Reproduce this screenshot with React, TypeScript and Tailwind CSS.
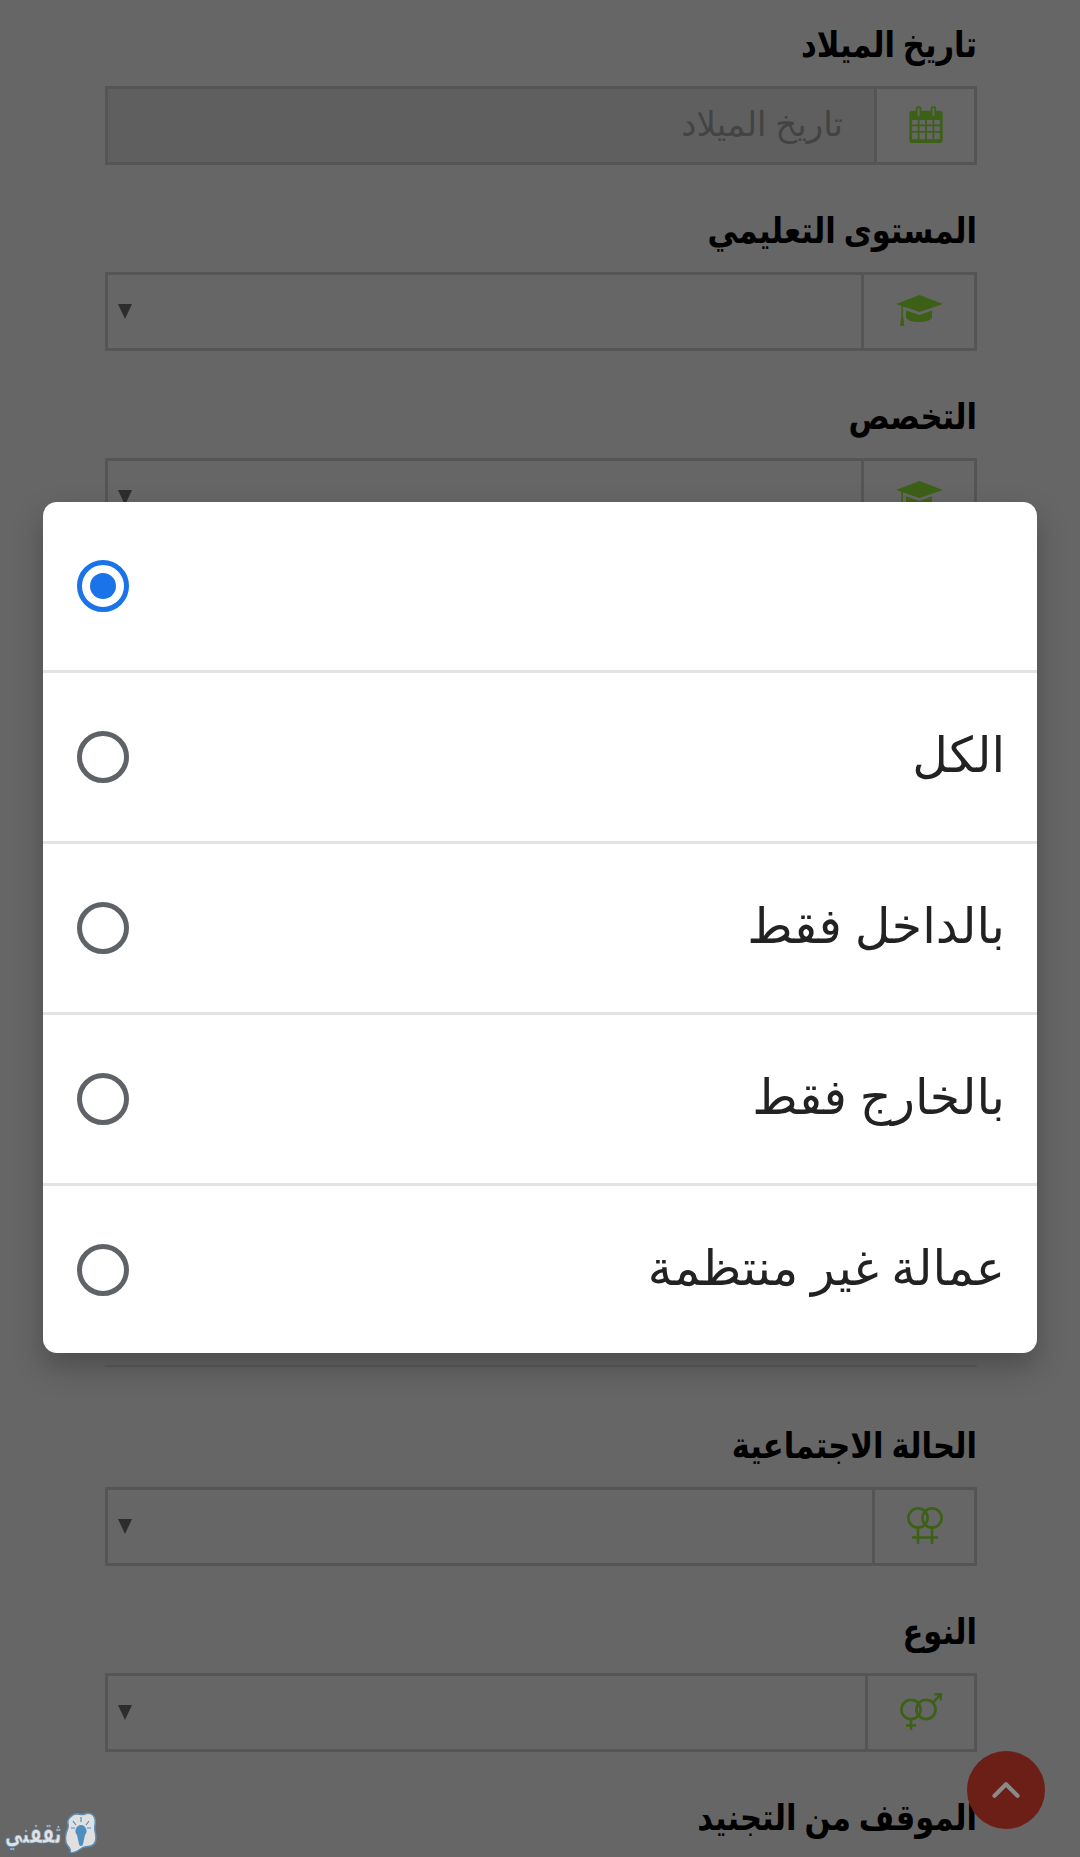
import { ChevronUp } from 'lucide-react';

const options = ['', 'الكل', 'بالداخل فقط', 'بالخارج فقط', 'عمالة غير منتظمة'];

function CalendarIcon() {
  return (
    <svg viewBox="0 0 36 40" className="h-[37px] w-[34px] fill-[#98f03a]">
      <path
        fillRule="evenodd"
        d="M3 5h4V3a3 3 0 0 1 6 0v2h10V3a3 3 0 0 1 6 0v2h4a3 3 0 0 1 3 3v29a3 3 0 0 1-3 3H3a3 3 0 0 1-3-3V8a3 3 0 0 1 3-3Zm6-2v7a1 1 0 0 0 2 0V3a1 1 0 0 0-2 0Zm16 0v7a1 1 0 0 0 2 0V3a1 1 0 0 0-2 0ZM3 15v5h6v-5H3Zm8 0v5h6v-5h-6Zm8 0v5h6v-5h-6Zm8 0v5h6v-5h-6ZM3 22v5h6v-5H3Zm8 0v5h6v-5h-6Zm8 0v5h6v-5h-6Zm8 0v5h6v-5h-6ZM3 29v7h6v-7H3Zm8 0v7h6v-7h-6Zm8 0v7h6v-7h-6Zm8 0v7h6v-7h-6Z"
      />
    </svg>
  );
}

function CapIcon() {
  return (
    <svg viewBox="0 0 47 31" className="h-[31px] w-[47px] fill-[#98f03a]">
      <polygon points="23.5,0 47,9 23.5,17 0,9" />
      <path d="M10 15.5 23.5 20 36 15.5V22c0 3-6 5-13 5s-13-2-13-5Z" />
      <rect x="5.4" y="10" width="1.6" height="13" />
      <path d="M4 31 5 22h2.4l1 9Z" />
    </svg>
  );
}

function VenusDoubleIcon() {
  return (
    <svg viewBox="0 0 36 37" className="h-[37px] w-[36px] fill-none stroke-[#98f03a] stroke-[2.6]">
      <circle cx="11" cy="11" r="9.6" />
      <circle cx="25" cy="11" r="9.6" />
      <path d="M11 21v16M25 21v16M5 30.5h26" />
    </svg>
  );
}

function VenusMarsIcon() {
  return (
    <svg viewBox="0 0 42 37" className="h-[37px] w-[42px] fill-none stroke-[#98f03a] stroke-[2.6]">
      <circle cx="11" cy="16.5" r="9.6" />
      <circle cx="26" cy="16.5" r="9.6" />
      <path d="M11 26v11M6 32.5h10M33 9.5 41 1.2M34.5 1.2H41V7.5" />
    </svg>
  );
}

function Triangle() {
  return (
    <svg viewBox="0 0 14 15" className="h-[15px] w-[14px] fill-[#707070]">
      <polygon points="0,0 14,0 7,15" />
    </svg>
  );
}

function Label({ children }: { children: React.ReactNode }) {
  return (
    <label className="mb-[17px] block h-[50px] origin-right scale-x-[0.85] text-[36px] leading-[50px] font-bold text-black">
      {children}
    </label>
  );
}

function Field({ label, icon, addon, placeholder }: { label: string; icon: React.ReactNode; addon: string; placeholder?: string }) {
  return (
    <div className="mb-[40px]">
      <Label>{label}</Label>
      <div className="flex h-[79px] border-[3px] border-[#d4d4d4]">
        <div className={`flex items-center justify-center border-l-[3px] border-[#d4d4d4] pb-[3px] ${addon}`}>{icon}</div>
        {placeholder ? (
          <input
            readOnly
            dir="rtl"
            placeholder={placeholder}
            className="min-w-0 flex-1 bg-[#eeeeee] pr-[31px] pb-[4px] text-[34px] outline-none placeholder:text-[#a8a8a8]"
          />
        ) : (
          <div className="flex flex-1 items-center justify-end pl-[10px]">
            <Triangle />
          </div>
        )}
      </div>
    </div>
  );
}

function Logo() {
  return (
    <div dir="ltr" className="absolute bottom-[4px] left-[5px] z-30 flex h-[41px] w-[93px] items-end">
      <span className="block w-[87px] shrink-0 origin-left scale-x-[0.62] whitespace-nowrap text-[28px] leading-[41px] font-bold text-[#e2e2e2] [-webkit-text-stroke:0.6px_#5b8fb5]">
        ثقفني
      </span>
      <svg viewBox="0 0 32 41" className="absolute bottom-0 left-[60px] h-[41px] w-[32px]">
        <path
          d="M8 3c4-3 8 1 12-1s9 0 10 5-1 7 0 12 2 9-1 13-8 1-12 4-8 5-12 5c1-3 0-5-2-7S0 27 1 22 4 16 3 12 4 6 8 3Z"
          fill="#e0e0e0"
          stroke="#5b8fb5"
          strokeWidth="1.5"
        />
        <path d="M16 13a6 6 0 0 1 4 10l-2 9a2 2 0 0 1-4 0l-2-9a6 6 0 0 1 4-10Z" fill="#4f8fc0" />
        <path d="M16 5v5M8 9l3 4M24 9l-3 4M6 16h4M22 16h4" stroke="#4f8fc0" strokeWidth="1.2" />
      </svg>
    </div>
  );
}

export default function App() {
  return (
    <div dir="rtl" className="relative h-[1857px] overflow-hidden bg-white font-['Noto_Sans','DejaVu_Sans',sans-serif]">
      {/* Form behind the dialog */}
      <div className="pt-[19px] pr-[103px] pl-[105px]">
        <Field label="تاريخ الميلاد" addon="w-[100px]" placeholder="تاريخ الميلاد" icon={<CalendarIcon />} />
        <Field label="المستوى التعليمي" addon="w-[113px]" icon={<CapIcon />} />
        <Field label="التخصص" addon="w-[113px]" icon={<CapIcon />} />
        <div className="h-[788px]" />
        <div className="h-[2px] bg-[#e6e6e6]" />
        <div className="h-[53px]" />
        <Field label="الحالة الاجتماعية" addon="w-[102px]" icon={<VenusDoubleIcon />} />
        <Field label="النوع" addon="w-[109px]" icon={<VenusMarsIcon />} />
        <Label>الموقف من التجنيد</Label>
      </div>

      {/* Backdrop */}
      <div className="absolute inset-0 z-10 bg-black/60" />

      {/* Radio dialog */}
      <div className="absolute top-[502px] left-[43px] z-20 flex h-[851px] w-[994px] flex-col overflow-hidden rounded-[14px] bg-white shadow-[0_14px_30px_rgba(0,0,0,0.25)]">
        {options.map((option, i) => (
          <div
            key={i}
            className="flex h-[171px] shrink-0 items-center justify-between border-b-[3px] border-[#e3e3e3] pr-[32px] pl-[34px] last:h-[auto] last:flex-1 last:border-b-0"
          >
            <span className="pb-[6px] text-[49px] text-[#222222]">{option}</span>
            {i === 0 ? (
              <span className="flex h-[52px] w-[52px] items-center justify-center rounded-full border-[5px] border-[#1a73e8]">
                <span className="h-[26px] w-[26px] rounded-full bg-[#1a73e8]" />
              </span>
            ) : (
              <span className="h-[52px] w-[52px] rounded-full border-[5px] border-[#5f6368]" />
            )}
          </div>
        ))}
      </div>

      {/* Back to top button */}
      <button className="absolute top-[1751px] left-[967px] z-30 flex h-[78px] w-[78px] items-center justify-center rounded-full bg-[#6b1f17]">
        <ChevronUp className="h-[46px] w-[46px] text-[#8a8a8a]" strokeWidth={2.2} />
      </button>

      <Logo />
    </div>
  );
}
